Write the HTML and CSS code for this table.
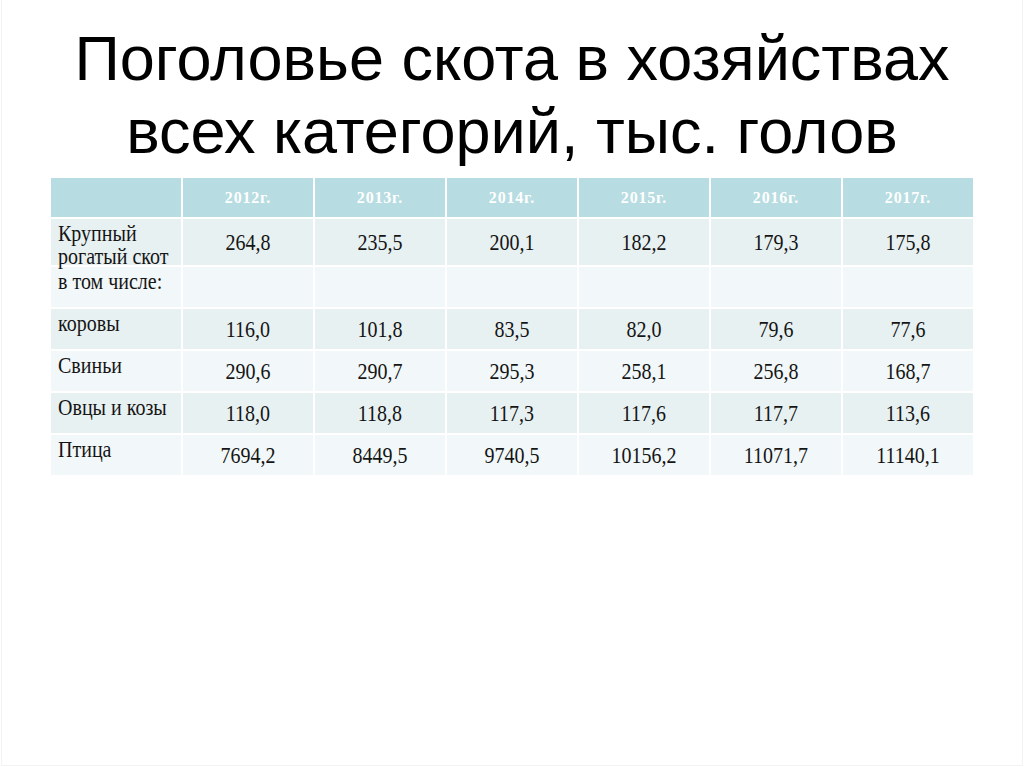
FILE: index.html
```html
<!DOCTYPE html>
<html lang="ru">
<head>
<meta charset="utf-8">
<title>Поголовье скота</title>
<link rel="stylesheet" href="styles.css">
</head>
<body>
<div class="slide">
  <h1 class="title">Поголовье скота в хозяйствах<br>всех категорий, тыс. голов</h1>
  <table class="data">
    <colgroup>
      <col class="c"><col class="c"><col class="c"><col class="c"><col class="c"><col class="c"><col class="c">
    </colgroup>
    <thead>
      <tr class="head">
        <th></th>
        <th>2012г.</th><th>2013г.</th><th>2014г.</th><th>2015г.</th><th>2016г.</th><th>2017г.</th>
      </tr>
    </thead>
    <tbody>
      <tr class="dark tall">
        <td class="lab"><span class="t">Крупный<br>рогатый скот</span></td>
        <td><span class="t">264,8</span></td><td><span class="t">235,5</span></td><td><span class="t">200,1</span></td><td><span class="t">182,2</span></td><td><span class="t">179,3</span></td><td><span class="t">175,8</span></td>
      </tr>
      <tr class="light">
        <td class="lab"><span class="t">в том числе:</span></td>
        <td></td><td></td><td></td><td></td><td></td><td></td>
      </tr>
      <tr class="dark">
        <td class="lab"><span class="t">коровы</span></td>
        <td><span class="t">116,0</span></td><td><span class="t">101,8</span></td><td><span class="t">83,5</span></td><td><span class="t">82,0</span></td><td><span class="t">79,6</span></td><td><span class="t">77,6</span></td>
      </tr>
      <tr class="light">
        <td class="lab"><span class="t">Свиньи</span></td>
        <td><span class="t">290,6</span></td><td><span class="t">290,7</span></td><td><span class="t">295,3</span></td><td><span class="t">258,1</span></td><td><span class="t">256,8</span></td><td><span class="t">168,7</span></td>
      </tr>
      <tr class="dark">
        <td class="lab"><span class="t">Овцы и козы</span></td>
        <td><span class="t">118,0</span></td><td><span class="t">118,8</span></td><td><span class="t">117,3</span></td><td><span class="t">117,6</span></td><td><span class="t">117,7</span></td><td><span class="t">113,6</span></td>
      </tr>
      <tr class="light">
        <td class="lab"><span class="t">Птица</span></td>
        <td><span class="t">7694,2</span></td><td><span class="t">8449,5</span></td><td><span class="t">9740,5</span></td><td><span class="t">10156,2</span></td><td><span class="t">11071,7</span></td><td><span class="t">11140,1</span></td>
      </tr>
    </tbody>
  </table>
</div>
</body>
</html>
```
FILE: styles.css
```css
html, body {
  margin: 0;
  padding: 0;
  background: #ffffff;
}
.slide {
  box-sizing: border-box;
  width: 1022px;
  height: 766px;
  margin-left: 1px;
  border: 1px solid #f3f3f3;
  border-top: none;
  padding-top: 22px;
}
.title {
  margin: 0;
  font-family: "Liberation Sans", Arial, sans-serif;
  font-weight: normal;
  font-size: 63px;
  line-height: 73px;
  color: #000;
  text-align: center;
}
.data {
  margin: 8px 0 0 47px;
  width: 926px;
  table-layout: fixed;
  border-collapse: separate;
  border-spacing: 2px;
  font-family: "Liberation Serif", "Times New Roman", serif;
  color: #151515;
}
.data col.c { width: 130px; }
.data tr.head { height: 39px; }
.data tbody tr { height: 40px; }
.data tbody tr.tall { height: 46px; }
.data th {
  padding: 0;
  background: #b7dce1;
  color: #ffffff;
  font-weight: bold;
  font-size: 16px;
  letter-spacing: 0.8px;
  text-align: center;
  vertical-align: middle;
}
.data td {
  padding: 0;
  font-size: 20px;
  line-height: 20px;
  text-align: center;
  vertical-align: middle;
}
.data .t {
  display: inline-block;
  transform: scaleY(1.15);
}
.data td.lab {
  text-align: left;
  vertical-align: top;
  padding: 4px 0 0 7px;
}
.data tr.tall td.lab { padding-top: 5px; }
.data tr.dark td { background: #e8f1f2; }
.data tr.light td { background: #f2f8f9; }
```
